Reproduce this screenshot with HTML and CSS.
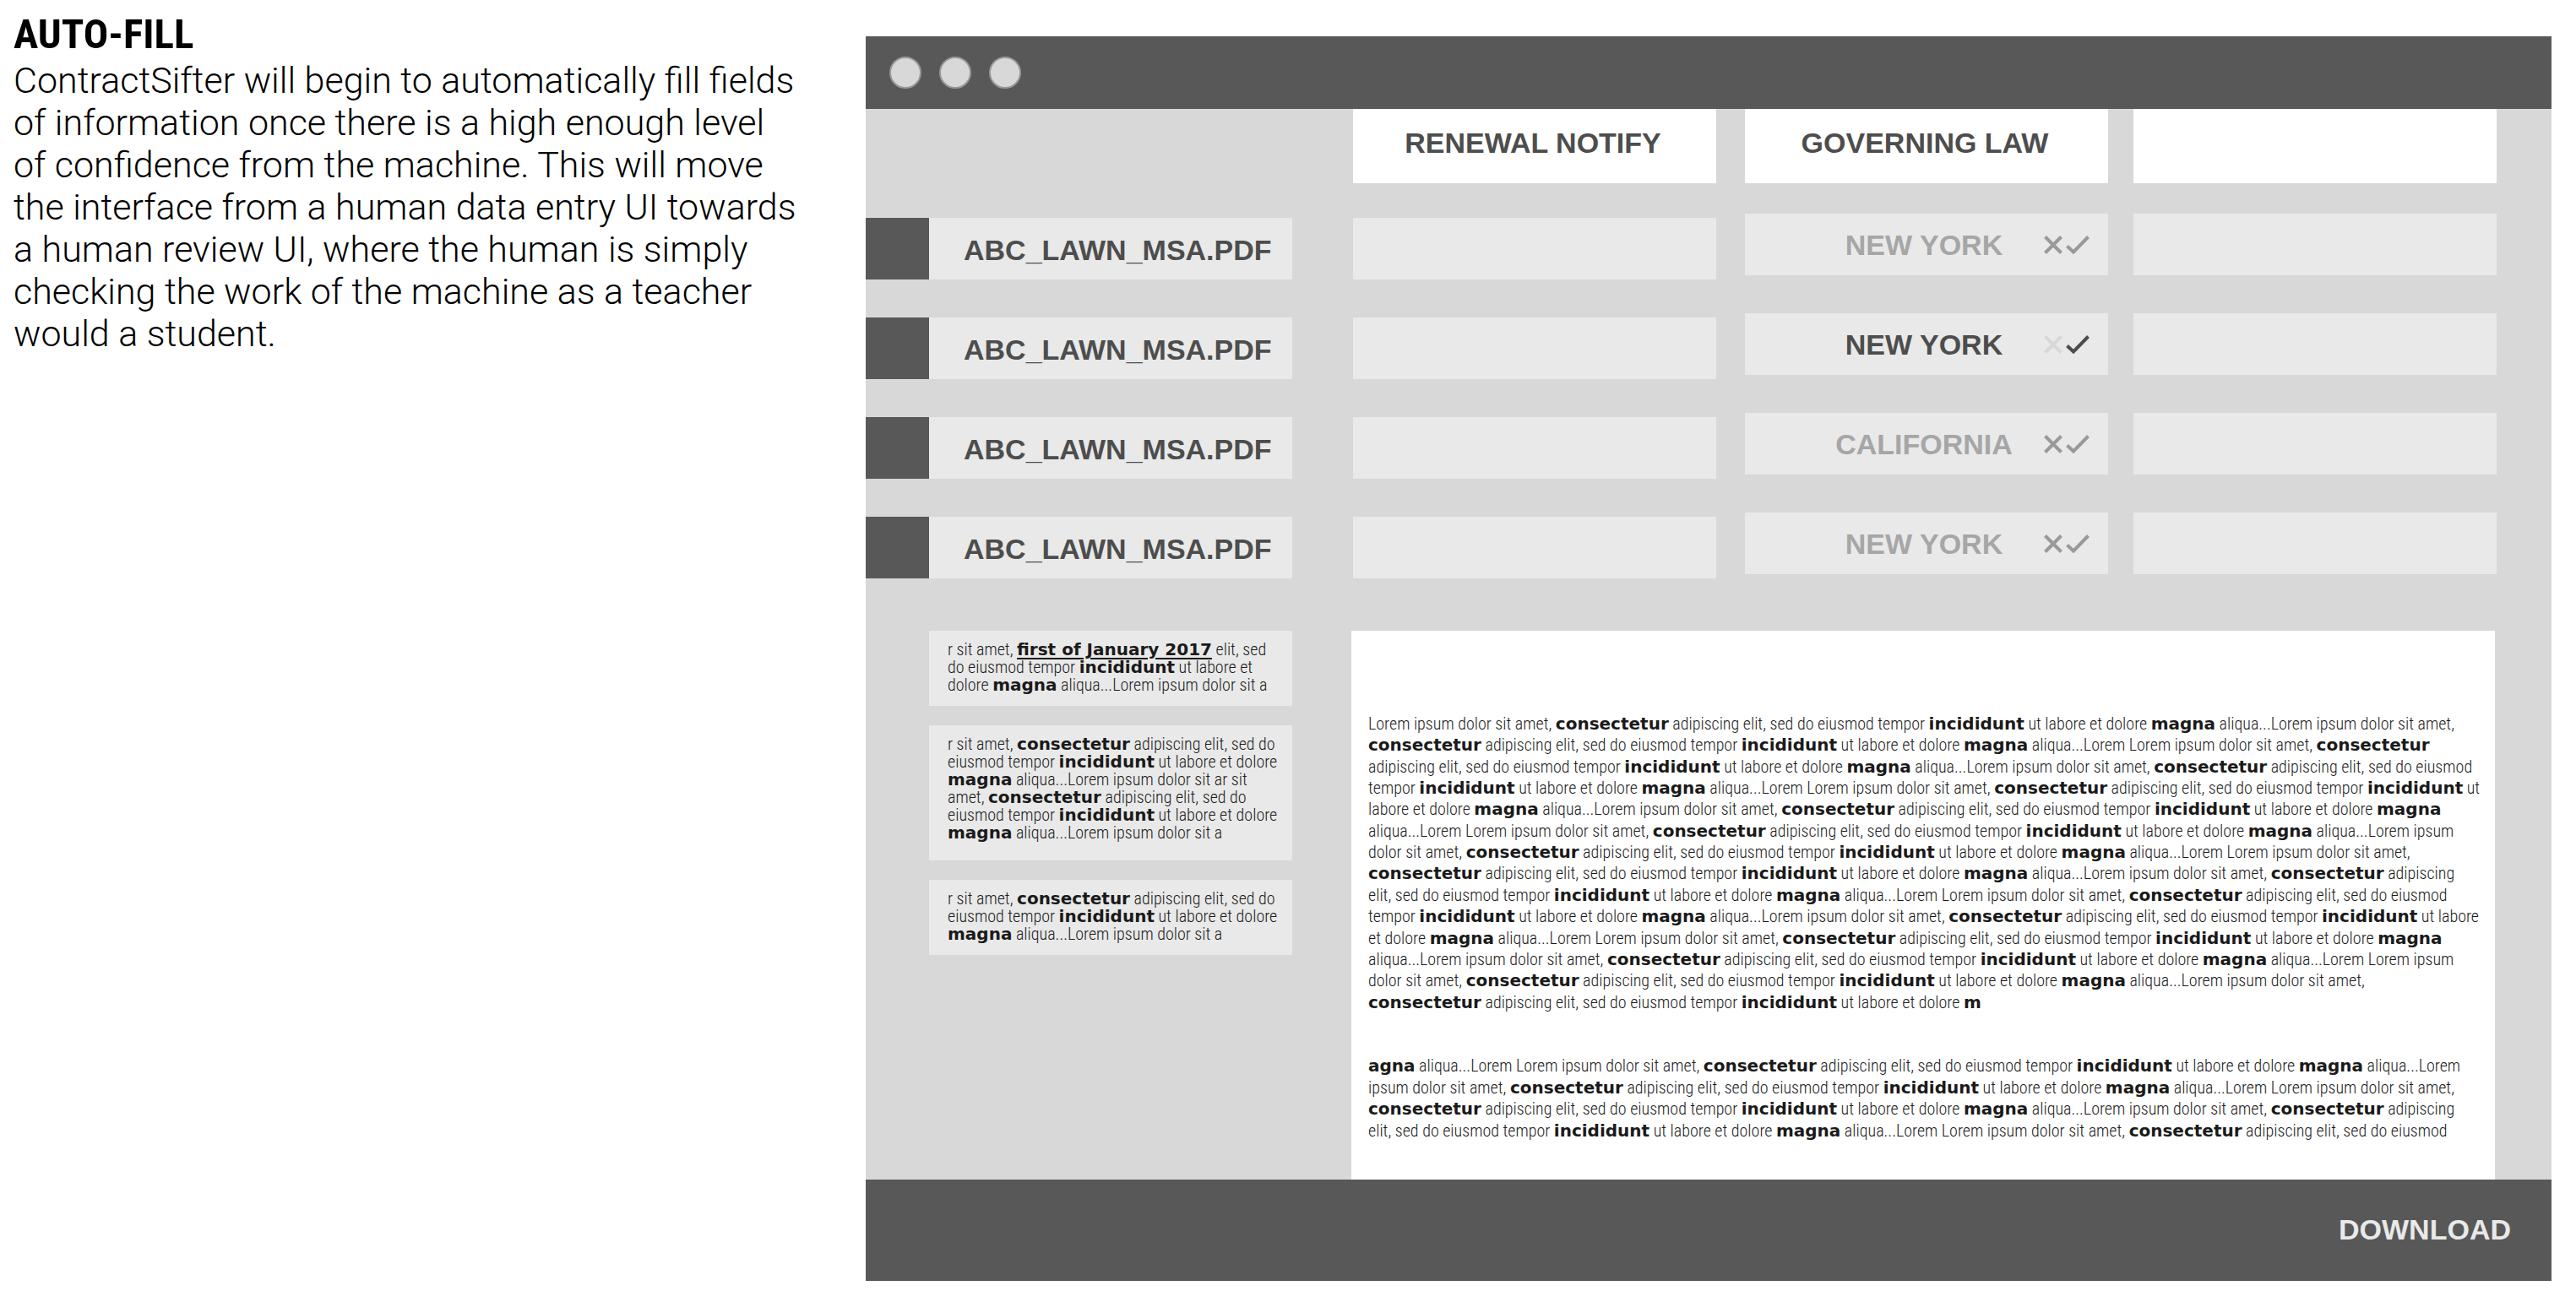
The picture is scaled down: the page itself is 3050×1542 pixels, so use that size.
FILE: index.html
```html
<!DOCTYPE html>
<html lang="en">
<head>
<meta charset="utf-8">
<title>ContractSifter – Auto-fill</title>
<link rel="stylesheet" href="styles.css">
</head>
<body>
<svg class="sprite" aria-hidden="true">
  <symbol id="cross" viewBox="0 0 22 22"><path d="M1.5 1.5 20.500 20.500M20.500 1.500 1.500 20.500"/></symbol>
  <symbol id="check" viewBox="0 0 28 22"><path d="M1.500 12.500 9 19.500 26.500 1.500"/></symbol>
</svg>
<main class="page">
  <section class="intro">
    <h1>AUTO-FILL</h1>
    <p>ContractSifter will begin to automatically fill fields<br>of information once there is a high enough level<br>of confidence from the machine. This will move<br>the interface from a human data entry UI towards<br>a human review UI, where the human is simply<br>checking the work of the machine as a teacher<br>would a student.</p>
  </section>

  <section class="window">
    <header class="titlebar"><i></i><i></i><i></i></header>

    <table class="contracts">
      <colgroup><col class="c-mark"><col class="c-file"><col class="c-renewal"><col class="c-law"><col class="c-extra"></colgroup>
      <thead>
        <tr>
          <td colspan="2"></td>
          <th scope="col"><div class="heading">RENEWAL NOTIFY</div></th>
          <th scope="col"><div class="heading">GOVERNING LAW</div></th>
          <td><div class="heading"></div></td>
        </tr>
      </thead>
      <tbody>
        <tr>
          <td><div class="mark"></div></td>
          <th scope="row"><div class="field file">ABC_LAWN_MSA.PDF</div></th>
          <td><div class="field"></div></td>
          <td class="high"><div class="field law"><span>NEW YORK</span><div class="review"><button type="button" aria-label="Reject"><svg class="cross"><use href="#cross"/></svg></button><button type="button" aria-label="Accept"><svg class="check"><use href="#check"/></svg></button></div></div></td>
          <td class="high"><div class="field"></div></td>
        </tr>
        <tr>
          <td><div class="mark"></div></td>
          <th scope="row"><div class="field file">ABC_LAWN_MSA.PDF</div></th>
          <td><div class="field"></div></td>
          <td class="high"><div class="field law accepted"><span>NEW YORK</span><div class="review"><button type="button" aria-label="Reject"><svg class="cross"><use href="#cross"/></svg></button><button type="button" aria-label="Accept"><svg class="check"><use href="#check"/></svg></button></div></div></td>
          <td class="high"><div class="field"></div></td>
        </tr>
        <tr>
          <td><div class="mark"></div></td>
          <th scope="row"><div class="field file">ABC_LAWN_MSA.PDF</div></th>
          <td><div class="field"></div></td>
          <td class="high"><div class="field law"><span>CALIFORNIA</span><div class="review"><button type="button" aria-label="Reject"><svg class="cross"><use href="#cross"/></svg></button><button type="button" aria-label="Accept"><svg class="check"><use href="#check"/></svg></button></div></div></td>
          <td class="high"><div class="field"></div></td>
        </tr>
        <tr>
          <td><div class="mark"></div></td>
          <th scope="row"><div class="field file">ABC_LAWN_MSA.PDF</div></th>
          <td><div class="field"></div></td>
          <td class="high"><div class="field law"><span>NEW YORK</span><div class="review"><button type="button" aria-label="Reject"><svg class="cross"><use href="#cross"/></svg></button><button type="button" aria-label="Accept"><svg class="check"><use href="#check"/></svg></button></div></div></td>
          <td class="high"><div class="field"></div></td>
        </tr>
      </tbody>
    </table>

    <div class="reader">
      <aside class="snippets">
        <p class="snippet">r sit amet, <b class="match">first of January 2017</b> elit, sed<br>do eiusmod tempor <b>incididunt</b> ut labore et<br>dolore <b>magna</b> aliqua...Lorem ipsum dolor sit a</p>
        <p class="snippet tall">r sit amet, <b>consectetur</b> adipiscing elit, sed do<br>eiusmod tempor <b>incididunt</b> ut labore et dolore<br><b>magna</b> aliqua...Lorem ipsum dolor sit ar sit<br>amet, <b>consectetur</b> adipiscing elit, sed do<br>eiusmod tempor <b>incididunt</b> ut labore et dolore<br><b>magna</b> aliqua...Lorem ipsum dolor sit a</p>
        <p class="snippet">r sit amet, <b>consectetur</b> adipiscing elit, sed do<br>eiusmod tempor <b>incididunt</b> ut labore et dolore<br><b>magna</b> aliqua...Lorem ipsum dolor sit a</p>
      </aside>
      <article class="document">
        <div class="lines long">
          <span>Lorem ipsum dolor sit amet, <b>consectetur</b> adipiscing elit, sed do eiusmod tempor <b>incididunt</b> ut labore et dolore <b>magna</b> aliqua...Lorem ipsum dolor sit amet,</span>
          <span><b>consectetur</b> adipiscing elit, sed do eiusmod tempor <b>incididunt</b> ut labore et dolore <b>magna</b> aliqua...Lorem Lorem ipsum dolor sit amet, <b>consectetur</b></span>
          <span>adipiscing elit, sed do eiusmod tempor <b>incididunt</b> ut labore et dolore <b>magna</b> aliqua...Lorem ipsum dolor sit amet, <b>consectetur</b> adipiscing elit, sed do eiusmod</span>
          <span>tempor <b>incididunt</b> ut labore et dolore <b>magna</b> aliqua...Lorem Lorem ipsum dolor sit amet, <b>consectetur</b> adipiscing elit, sed do eiusmod tempor <b>incididunt</b> ut</span>
          <span>labore et dolore <b>magna</b> aliqua...Lorem ipsum dolor sit amet, <b>consectetur</b> adipiscing elit, sed do eiusmod tempor <b>incididunt</b> ut labore et dolore <b>magna</b></span>
          <span>aliqua...Lorem Lorem ipsum dolor sit amet, <b>consectetur</b> adipiscing elit, sed do eiusmod tempor <b>incididunt</b> ut labore et dolore <b>magna</b> aliqua...Lorem ipsum</span>
          <span>dolor sit amet, <b>consectetur</b> adipiscing elit, sed do eiusmod tempor <b>incididunt</b> ut labore et dolore <b>magna</b> aliqua...Lorem Lorem ipsum dolor sit amet,</span>
          <span><b>consectetur</b> adipiscing elit, sed do eiusmod tempor <b>incididunt</b> ut labore et dolore <b>magna</b> aliqua...Lorem ipsum dolor sit amet, <b>consectetur</b> adipiscing</span>
          <span>elit, sed do eiusmod tempor <b>incididunt</b> ut labore et dolore <b>magna</b> aliqua...Lorem Lorem ipsum dolor sit amet, <b>consectetur</b> adipiscing elit, sed do eiusmod</span>
          <span>tempor <b>incididunt</b> ut labore et dolore <b>magna</b> aliqua...Lorem ipsum dolor sit amet, <b>consectetur</b> adipiscing elit, sed do eiusmod tempor <b>incididunt</b> ut labore</span>
          <span>et dolore <b>magna</b> aliqua...Lorem Lorem ipsum dolor sit amet, <b>consectetur</b> adipiscing elit, sed do eiusmod tempor <b>incididunt</b> ut labore et dolore <b>magna</b></span>
          <span>aliqua...Lorem ipsum dolor sit amet, <b>consectetur</b> adipiscing elit, sed do eiusmod tempor <b>incididunt</b> ut labore et dolore <b>magna</b> aliqua...Lorem Lorem ipsum</span>
          <span>dolor sit amet, <b>consectetur</b> adipiscing elit, sed do eiusmod tempor <b>incididunt</b> ut labore et dolore <b>magna</b> aliqua...Lorem ipsum dolor sit amet,</span>
          <span><b>consectetur</b> adipiscing elit, sed do eiusmod tempor <b>incididunt</b> ut labore et dolore <b>m</b></span>
        </div>
        <div class="lines short">
          <span><b>agna</b> aliqua...Lorem Lorem ipsum dolor sit amet, <b>consectetur</b> adipiscing elit, sed do eiusmod tempor <b>incididunt</b> ut labore et dolore <b>magna</b> aliqua...Lorem</span>
          <span>ipsum dolor sit amet, <b>consectetur</b> adipiscing elit, sed do eiusmod tempor <b>incididunt</b> ut labore et dolore <b>magna</b> aliqua...Lorem Lorem ipsum dolor sit amet,</span>
          <span><b>consectetur</b> adipiscing elit, sed do eiusmod tempor <b>incididunt</b> ut labore et dolore <b>magna</b> aliqua...Lorem ipsum dolor sit amet, <b>consectetur</b> adipiscing</span>
          <span>elit, sed do eiusmod tempor <b>incididunt</b> ut labore et dolore <b>magna</b> aliqua...Lorem Lorem ipsum dolor sit amet, <b>consectetur</b> adipiscing elit, sed do eiusmod</span>
        </div>
      </article>
    </div>

    <footer class="actions"><button type="button">DOWNLOAD</button></footer>
  </section>
</main>
</body>
</html>
```
FILE: styles.css
```css
* { box-sizing: border-box; }

body {
  margin: 0;
  background: #fff;
  color: #000;
  font-family: "Liberation Sans", Arial, sans-serif;
}

h1, p { margin: 0; }

button {
  padding: 0;
  border: 0;
  background: none;
  color: inherit;
  font: inherit;
  cursor: pointer;
}

.sprite { display: none; }

.page {
  display: grid;
  grid-template-columns: minmax(0, 1009fr) minmax(0, 1996fr);
  padding: 16px 29px 24px 16px;
}

/* Introduction */
.intro h1 {
  font: 700 49px/50px "Roboto Condensed", "Roboto", sans-serif;
}

.intro p {
  margin-top: 4px;
  font: 300 43px/50px "Roboto", sans-serif;
  white-space: nowrap;
}

/* Application window */
.window {
  margin-top: 27px;
  background: #d8d8d8;
}

.titlebar {
  display: flex;
  align-items: center;
  gap: 21px;
  height: 86px;
  padding-left: 28px;
  background: #585858;
}

.titlebar i {
  width: 38px;
  height: 38px;
  border: 2px solid #999;
  border-radius: 50%;
  background: #d8d8d8;
}

/* Contracts */
.contracts {
  width: 100%;
  table-layout: fixed;
  border-collapse: collapse;
  color: #4d4d4d;
  font-size: 34px;
  font-weight: 700;
  line-height: 40px;
}

.c-mark { width: 75px; }
.c-file { width: 502px; }
.c-renewal { width: 464px; }
.c-law { width: 460px; }
.c-extra { width: 495px; }

.contracts th,
.contracts td { padding: 0; vertical-align: top; }
.contracts tr > :nth-last-child(4) { padding-right: 72px; }
.contracts tr > :nth-last-child(3) { padding-right: 34px; }
.contracts tr > :nth-last-child(2) { padding-right: 30px; }
.contracts tr > :nth-last-child(1) { padding-right: 65px; }
.contracts thead th,
.contracts thead td { padding-bottom: 36px; }

.heading {
  height: 88px;
  padding: 20px 4px 0 0;
  background: #fff;
  text-align: center;
  white-space: nowrap;
}

.contracts tbody th,
.contracts tbody td { height: 118px; padding-top: 5px; }
.contracts tbody td.high { padding-top: 0; }

.field,
.mark { height: 73px; }
.mark { background: #585858; }

.field {
  display: flex;
  align-items: center;
  background: #e9e9e9;
  white-space: nowrap;
}

.file { padding: 2px 0 0 41px; }

.law {
  position: relative;
  justify-content: center;
  padding-right: 6px;
  color: #a6a6a6;
}

.law.accepted { color: #4d4d4d; }

.review {
  position: absolute;
  right: 22px;
  display: flex;
  align-items: center;
  gap: 4px;
  color: #999;
}

.review button { display: flex; }

.review svg {
  height: 22px;
  fill: none;
  stroke: currentColor;
  stroke-width: 4;
}

.cross { width: 22px; }
.check { width: 28px; }

.accepted .review { color: #4d4d4d; }
.accepted .cross { color: #d8d8d8; }

/* Snippets and document */
.reader {
  display: grid;
  grid-template-columns: minmax(0, 430fr) minmax(0, 1354fr);
  gap: 70px;
  margin-top: 22px;
  padding: 0 67px 0 75px;
  color: #1a1a1a;
  font: 300 20px/21px "Roboto Condensed", "Roboto", sans-serif;
  white-space: nowrap;
}

.reader b {
  font: 700 20px/1px "DejaVu Sans", sans-serif;
}

.snippets {
  display: flex;
  flex-direction: column;
  gap: 23px;
}

.snippet {
  min-height: 89px;
  padding: 12px 0 12px 22px;
  background: #e9e9e9;
}

.snippet.tall { padding-bottom: 22px; }

.match {
  text-decoration: underline;
  text-decoration-thickness: 2px;
  text-underline-offset: 3px;
}

.document {
  display: grid;
  gap: 50px;
  padding: 98px 20px 45px;
  background: #fff;
}

.lines {
  display: grid;
  align-content: stretch;
  line-height: 25px;
}

.lines.long { min-height: 355px; }
.lines.short { min-height: 102px; }

.actions {
  display: flex;
  align-items: center;
  justify-content: flex-end;
  height: 120px;
  padding: 0 48px 2px 0;
  background: #585858;
  color: #e9e9e9;
  font-size: 34px;
  font-weight: 700;
}
```
